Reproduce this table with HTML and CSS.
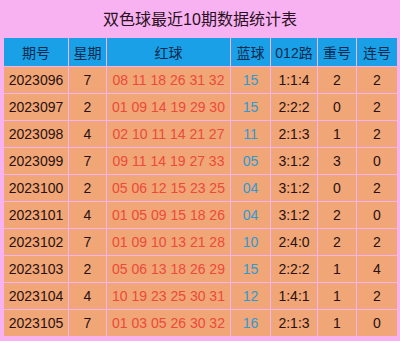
FILE: index.html
```html
<!DOCTYPE html>
<html lang="zh">
<head>
<meta charset="utf-8">
<link rel="stylesheet" href="styles.css">
</head>
<body>
<div class="page">
  <div class="title">双色球最近10期数据统计表</div>
  <table class="stats">
    <colgroup>
      <col class="c-issue"><col class="c-week"><col class="c-red"><col class="c-blue"><col class="c-road"><col class="c-rep"><col class="c-con">
    </colgroup>
    <thead>
      <tr><th>期号</th><th>星期</th><th>红球</th><th>蓝球</th><th>012路</th><th>重号</th><th>连号</th></tr>
    </thead>
    <tbody>
      <tr><td>2023096</td><td>7</td><td class="red">08 11 18 26 31 32</td><td class="blue">15</td><td>1:1:4</td><td>2</td><td>2</td></tr>
      <tr><td>2023097</td><td>2</td><td class="red">01 09 14 19 29 30</td><td class="blue">15</td><td>2:2:2</td><td>0</td><td>2</td></tr>
      <tr><td>2023098</td><td>4</td><td class="red">02 10 11 14 21 27</td><td class="blue">11</td><td>2:1:3</td><td>1</td><td>2</td></tr>
      <tr><td>2023099</td><td>7</td><td class="red">09 11 14 19 27 33</td><td class="blue">05</td><td>3:1:2</td><td>3</td><td>0</td></tr>
      <tr><td>2023100</td><td>2</td><td class="red">05 06 12 15 23 25</td><td class="blue">04</td><td>3:1:2</td><td>0</td><td>2</td></tr>
      <tr><td>2023101</td><td>4</td><td class="red">01 05 09 15 18 26</td><td class="blue">04</td><td>3:1:2</td><td>2</td><td>0</td></tr>
      <tr><td>2023102</td><td>7</td><td class="red">01 09 10 13 21 28</td><td class="blue">10</td><td>2:4:0</td><td>2</td><td>2</td></tr>
      <tr><td>2023103</td><td>2</td><td class="red">05 06 13 18 26 29</td><td class="blue">15</td><td>2:2:2</td><td>1</td><td>4</td></tr>
      <tr><td>2023104</td><td>4</td><td class="red">10 19 23 25 30 31</td><td class="blue">12</td><td>1:4:1</td><td>1</td><td>2</td></tr>
      <tr><td>2023105</td><td>7</td><td class="red">01 03 05 26 30 32</td><td class="blue">16</td><td>2:1:3</td><td>1</td><td>0</td></tr>
    </tbody>
  </table>
</div>
</body>
</html>
```

FILE: styles.css
```css
html, body {
  margin: 0;
  padding: 0;
  background: #f8b2f2;
}
.page {
  width: 400px;
  height: 341px;
  padding: 0 3px;
  box-sizing: border-box;
  font-family: "Liberation Sans", "Noto Sans CJK SC", sans-serif;
}
.title {
  height: 37px;
  line-height: 40px;
  text-align: center;
  font-size: 16px;
  color: #2a1020;
}
.stats {
  width: 394px;
  border-collapse: collapse;
  table-layout: fixed;
}
.c-issue { width: 65px; }
.c-week { width: 38px; }
.c-red { width: 124px; }
.c-blue { width: 40px; }
.c-road { width: 47px; }
.c-rep { width: 39px; }
.c-con { width: 41px; }
.stats th, .stats td {
  border: 1px solid #f6b4ee;
  padding: 0;
  text-align: center;
  font-size: 14px;
  font-weight: normal;
  color: #2a1010;
}
.stats th {
  background: #1aa0e6;
  height: 28px;
  color: #0a2a50;
}
.stats td {
  background: #f0a676;
  height: 26px;
}
.stats td.red {
  color: #ec4a3a;
}
.stats td.blue {
  color: #2f9ad4;
}
```
